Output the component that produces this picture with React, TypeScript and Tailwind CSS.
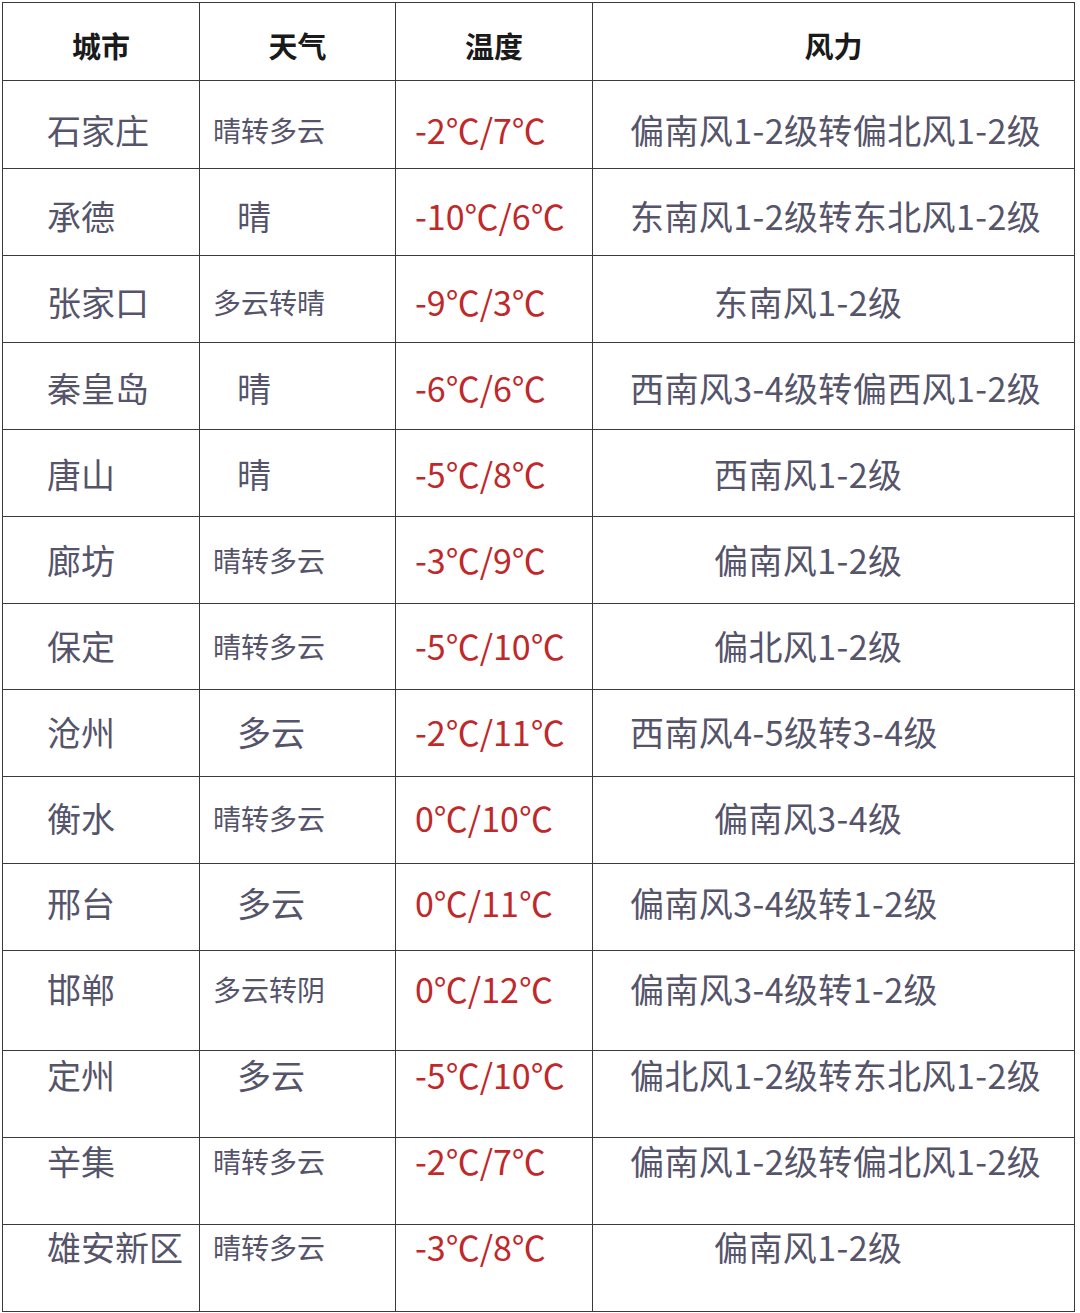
const rows = [
  { city: '石家庄', weather: '晴转多云', temp: '-2℃/7℃', wind: '偏南风1-2级转偏北风1-2级', h: 'h-[88px]', pt: 'pt-[32px]' },
  { city: '承德', weather: '晴', temp: '-10℃/6℃', wind: '东南风1-2级转东北风1-2级', h: 'h-[87px]', pt: 'pt-[30px]' },
  { city: '张家口', weather: '多云转晴', temp: '-9℃/3℃', wind: '东南风1-2级', h: 'h-[87px]', pt: 'pt-[29px]' },
  { city: '秦皇岛', weather: '晴', temp: '-6℃/6℃', wind: '西南风3-4级转偏西风1-2级', h: 'h-[87px]', pt: 'pt-[28px]' },
  { city: '唐山', weather: '晴', temp: '-5℃/8℃', wind: '西南风1-2级', h: 'h-[87px]', pt: 'pt-[27px]' },
  { city: '廊坊', weather: '晴转多云', temp: '-3℃/9℃', wind: '偏南风1-2级', h: 'h-[87px]', pt: 'pt-[26px]' },
  { city: '保定', weather: '晴转多云', temp: '-5℃/10℃', wind: '偏北风1-2级', h: 'h-[86px]', pt: 'pt-[25px]' },
  { city: '沧州', weather: '多云', temp: '-2℃/11℃', wind: '西南风4-5级转3-4级', h: 'h-[87px]', pt: 'pt-[25px]' },
  { city: '衡水', weather: '晴转多云', temp: '0℃/10℃', wind: '偏南风3-4级', h: 'h-[87px]', pt: 'pt-[24px]' },
  { city: '邢台', weather: '多云', temp: '0℃/11℃', wind: '偏南风3-4级转1-2级', h: 'h-[87px]', pt: 'pt-[22px]' },
  { city: '邯郸', weather: '多云转阴', temp: '0℃/12℃', wind: '偏南风3-4级转1-2级', h: 'h-[100px]', pt: 'pt-[21px]' },
  { city: '定州', weather: '多云', temp: '-5℃/10℃', wind: '偏北风1-2级转东北风1-2级', h: 'h-[87px]', pt: 'pt-[7px]' },
  { city: '辛集', weather: '晴转多云', temp: '-2℃/7℃', wind: '偏南风1-2级转偏北风1-2级', h: 'h-[87px]', pt: 'pt-[6px]' },
  { city: '雄安新区', weather: '晴转多云', temp: '-3℃/8℃', wind: '偏南风1-2级', h: 'h-[87px]', pt: 'pt-[5px]' },
]

const line = 'border-[1.5px] border-[#3a3a3a] p-0'

export default function App() {
  return (
    <div className="min-h-[1313px] w-[1080px] bg-white pl-[2px] pt-[2px] font-['Noto_Sans_CJK_SC',sans-serif]">
      <table className="w-[1073px] table-fixed border-collapse">
        <colgroup>
          <col className="w-[197px]" />
          <col className="w-[196px]" />
          <col className="w-[197px]" />
          <col />
        </colgroup>
        <thead>
          <tr className="h-[78px]">
            {['城市', '天气', '温度', '风力'].map((t) => (
              <th key={t} className={`${line} align-top`}>
                <div className="pt-[25px] text-center text-[29px] font-bold leading-[34px] text-[#1a1a1a]">{t}</div>
              </th>
            ))}
          </tr>
        </thead>
        <tbody>
          {rows.map((r) => {
            const longWeather = r.weather.length > 2
            const longWind = r.wind.length > 8
            return (
              <tr key={r.city} className={r.h}>
                <td className={`${line} align-top`}>
                  <div className={`${r.pt} pl-[44px] text-[34px] leading-[34px] text-[#55546a] whitespace-nowrap`}>
                    {r.city}
                  </div>
                </td>
                <td className={`${line} align-top`}>
                  {longWeather ? (
                    <div className={`${r.pt} pl-[13px] text-[28px] leading-[34px] text-[#55546a] whitespace-nowrap`}>
                      {r.weather}
                    </div>
                  ) : (
                    <div className={`${r.pt} pl-[37px] text-[34px] leading-[34px] text-[#55546a] whitespace-nowrap`}>
                      {r.weather}
                    </div>
                  )}
                </td>
                <td className={`${line} align-top`}>
                  <div className={`${r.pt} pl-[19px] text-[34px] leading-[34px] text-[#c0282a] whitespace-nowrap`}>
                    {r.temp}
                  </div>
                </td>
                <td className={`${line} align-top`}>
                  <div
                    className={`${r.pt} ${longWind ? 'pl-[37px]' : 'pl-[121px]'} text-[34px] leading-[34px] tracking-[0.4px] text-[#55546a] whitespace-nowrap`}
                  >
                    {r.wind}
                  </div>
                </td>
              </tr>
            )
          })}
        </tbody>
      </table>
    </div>
  )
}
